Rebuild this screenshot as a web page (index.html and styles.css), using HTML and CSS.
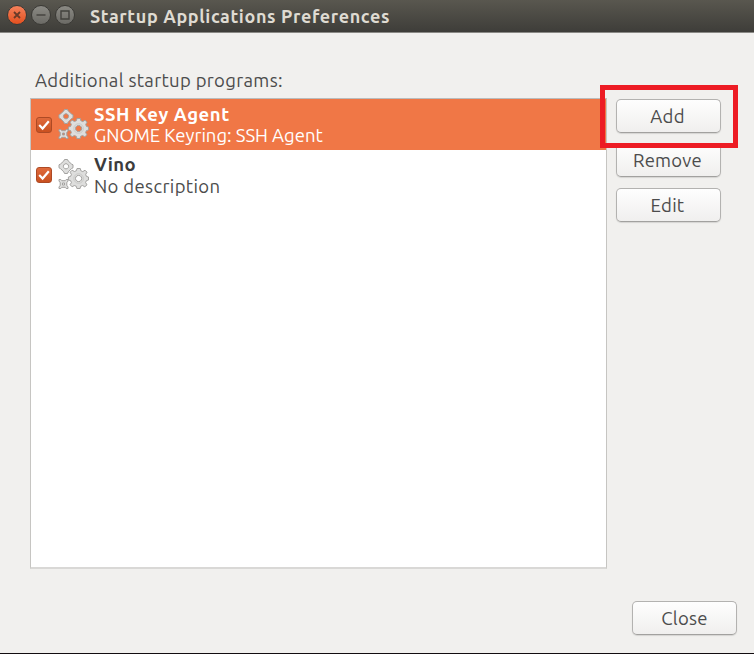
FILE: index.html
```
<!DOCTYPE html>
<html lang="en">
<head>
<meta charset="utf-8">
<title>Startup Applications Preferences</title>
<link rel="stylesheet" href="styles.css">
</head>
<body>
<svg width="0" height="0" class="defs" aria-hidden="true">
  <defs>
    <symbol id="gears" viewBox="0 0 32 32">
      <g fill="#dededd" stroke="#a3a2a0" stroke-width="1" stroke-linejoin="round" fill-rule="evenodd">
        <path d="M7.500 1.500h3l.7 1.500 3.300 3 1.500.8v3l-1.500.8-3.300 3.300-.7 1.600h-3l-.7-1.600-3.300-3.300-1.500-.8v-3l1.500-.8 3.300-3zM9 5.700a2.600 2.600 0 1 0 .01 0z"/>
        <path d="M2 21.500h1.800l1 1.200h3.400l1-1.200h1.800v1.800l-1.200 1v3.400l1.200 1v1.800h-1.800l-1-1.200h-3.400l-1 1.200h-1.800v-1.800l1.200-1v-3.400l-1.200-1zM5.500 25v2h2v-2z"/>
        <path d="M20 10.500h3.300l.5 2.200 2 .9 2.200-1.400 2 2-1.300 2.200.7 2 2.100.6v3l-2.100.6-.8 2 1.400 2.200-2.200 2-2.200-1.300-2 .8-.5 2.200h-3.200l-.6-2.200-2-.8-2.200 1.300-2-2.100 1.300-2.100-.8-2-2.200-.6v-3l2.200-.6.8-2-1.300-2.200 2-2 2.300 1.300 2-.8zM21.600 17.400a3.100 3.100 0 1 0 .01 0z"/>
      </g>
      <circle cx="21.600" cy="20.500" r="4.800" fill="none" stroke="#cbcbc9" stroke-width="1"/>
    </symbol>
    <symbol id="tick" viewBox="0 0 16 16">
      <path d="M3.200 8l3.400 3.500 6.200-7.300" fill="none" stroke="#fff" stroke-width="2.200"/>
    </symbol>
  </defs>
</svg>
<div class="window">
  <header class="titlebar">
    <span class="control close"><svg viewBox="0 0 20 20"><path d="M7 7l6 6M13 7l-6 6"/></svg></span>
    <span class="control"><svg viewBox="0 0 20 20"><path d="M5.500 10h9"/></svg></span>
    <span class="control"><svg viewBox="0 0 20 20"><path d="M6 6h8v8h-8z"/></svg></span>
    <h1>Startup Applications Preferences</h1>
  </header>
  <main>
    <div class="label">Additional startup programs:</div>
    <div class="content">
      <ul class="list">
        <li class="selected">
          <span class="check"><svg><use href="#tick"/></svg></span>
          <svg class="gears"><use href="#gears"/></svg>
          <div class="entry"><b class="ssh">SSH Key Agent</b><span class="keyring">GNOME Keyring: SSH Agent</span></div>
        </li>
        <li>
          <span class="check"><svg><use href="#tick"/></svg></span>
          <svg class="gears"><use href="#gears"/></svg>
          <div class="entry"><b class="vino">Vino</b><span class="nodesc">No description</span></div>
        </li>
      </ul>
      <div class="actions">
        <button class="add">Add</button>
        <button class="remove">Remove</button>
        <button class="edit">Edit</button>
        <div class="highlight"></div>
      </div>
    </div>
    <footer><button class="done">Close</button></footer>
  </main>
</div>
</body>
</html>
```
FILE: styles.css
```
* { box-sizing: border-box; }
body { margin: 0; font-family: Ubuntu, "Noto Sans", sans-serif; font-size: 18.500px; color: #4c4c4c; }
.defs { position: absolute; }
.window { width: 754px; height: 654px; background: #f1f0ee; border-bottom: 1px solid #120c10; display: flex; flex-direction: column; overflow: hidden; }
.titlebar { height: 33px; flex: none; display: flex; align-items: flex-start; padding: 5px 0 0 7px; gap: 4px; background: linear-gradient(#59574f, #3e3d39); border-bottom: 1px solid #8a8985; }
.control { width: 20px; height: 20px; border-radius: 50%; border: 1px solid #3b3a36; background: linear-gradient(#8b8a84, #6b6a65); }
.control svg { display: block; width: 20px; height: 20px; margin: -1px; fill: none; stroke: #42413d; stroke-width: 1.4; }
.control.close { background: linear-gradient(#f4815b, #e4501f); }
.control.close svg { stroke: #6b3a28; stroke-width: 1.8; }
h1 { margin: 0 0 0 11px; font-size: 18px; line-height: 22px; font-weight: 700; letter-spacing: .62px; color: #dfdbd2; white-space: nowrap; }
main { flex: 1; display: flex; flex-direction: column; padding: 32px 17px 17px 30px; }
.label { height: 33px; line-height: 30px; padding-left: 5px; letter-spacing: .32px; white-space: nowrap; }
.content { display: flex; gap: 9px; align-items: flex-start; }
.list { width: 577px; height: 471px; margin: 0; padding: 0; list-style: none; background: #fff; border: 1px solid #c6c5c2; border-top-color: #bbb; border-bottom: 2px solid #d9d8d6; }
.list li { height: 51px; display: flex; align-items: flex-start; }
.list li + li .check { margin-top: 17px; }
.list li + li .gears { margin-top: 8px; }
.list li + li .entry { padding-top: 4px; }
.selected { background: #f07746; color: #fff; }
.check { width: 16px; height: 16px; margin: 18px 0 0 5px; flex: none; border: 1px solid #ad4a25; border-radius: 3px; background: linear-gradient(#df6a3c, #c9501f); }
.check svg { display: block; width: 16px; height: 16px; margin: -1px; }
.gears { width: 32px; height: 32px; margin: 9px 5px 0 5px; flex: none; }
.entry { display: flex; flex-direction: column; line-height: 21px; padding-top: 5px; white-space: nowrap; }
.ssh { letter-spacing: .55px; }
.keyring { letter-spacing: -.03px; }
.vino { letter-spacing: .3px; }
.nodesc { letter-spacing: .36px; margin-top: 1px; }
li:not(.selected) b { color: #3c3c3c; }
.actions { position: relative; display: flex; flex-direction: column; gap: 10px; padding-top: 1px; }
button { display: block; width: 105px; height: 34px; padding: 0; border: 1px solid #b3b2b0; border-bottom-color: #a2a19f; border-radius: 5px; background: linear-gradient(#fefefe, #f0efee); box-shadow: 0 1px 1px #d5d4d2; font: inherit; line-height: 32px; color: #4c4c4c; letter-spacing: .25px; text-align: center; padding-right: 2px; }
.edit { margin-top: 1px; }
.highlight { position: absolute; left: -16px; top: -13px; width: 138px; height: 63px; border: 5px solid #ed1c24; }
footer { margin-top: auto; display: flex; justify-content: flex-end; }
.done { margin-bottom: 1px; padding-right: 0; }
```
